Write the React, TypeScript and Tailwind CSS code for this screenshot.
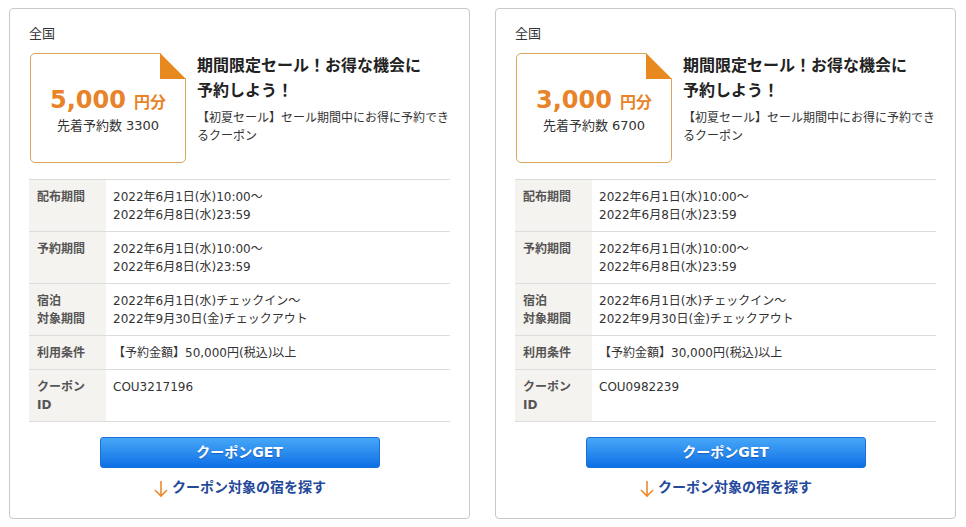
import React from "react";

type Coupon = {
  amount: string;
  count: string;
  cond: string;
  id: string;
};

const coupons: Coupon[] = [
  { amount: "5,000", count: "3300", cond: "【予約金額】50,000円(税込)以上", id: "COU3217196" },
  { amount: "3,000", count: "6700", cond: "【予約金額】30,000円(税込)以上", id: "COU0982239" },
];

function Row({ label, children }: { label: React.ReactNode; children: React.ReactNode }) {
  return (
    <div className="flex border-t border-[#dcdcdc]">
      <div className="w-[77px] shrink-0 bg-[#f5f3ef] pl-[8px] pt-[8px] pb-[7px] text-[12px] leading-[18px] font-bold text-[#555]">
        {label}
      </div>
      <div className="flex-1 pl-[7px] pt-[8px] pb-[7px] text-[12px] leading-[18px] text-[#333]">{children}</div>
    </div>
  );
}

function Card({ c }: { c: Coupon }) {
  return (
    <div className="w-[461px] h-[511px] rounded-[4px] border border-[#c8c8c8] bg-white px-[19px] pt-[16px]">
      <div className="text-[13px] leading-[18px] text-[#333]">全国</div>
      <div className="mt-[10px] flex">
        <div className="relative w-[156px] h-[110px] shrink-0 ml-[1px] rounded-[5px] border border-[#d9a75a] bg-white flex flex-col items-center justify-center">
          <svg className="absolute right-[-1px] top-[-1px]" width="26" height="26" viewBox="0 0 26 26">
            <polygon points="0,0 26,0 26,26" fill="#ffffff" />
            <polygon points="0,0 0,26 26,26" fill="#e8891f" />
          </svg>
          <div className="flex items-baseline text-[#e8832a] font-bold mt-[4px]">
            <span className="text-[24px] leading-[30px]">{c.amount}</span>
            <span className="text-[16px] ml-[8px]">円分</span>
          </div>
          <div className="text-[13px] leading-[20px] text-[#333] mt-[1px]">先着予約数 {c.count}</div>
        </div>
        <div className="ml-[11px] flex-1">
          <div className="text-[16px] leading-[25px] font-bold text-[#222]">
            期間限定セール！お得な機会に
            <br />
            予約しよう！
          </div>
          <div className="mt-[6px] text-[12px] leading-[18px] text-[#333]">
            【初夏セール】セール期間中にお得に予約でき
            <br />
            るクーポン
          </div>
        </div>
      </div>
      <div className="mt-[16px] border-b border-[#dcdcdc]">
        <Row label="配布期間">
          2022年6月1日(水)10:00～
          <br />
          2022年6月8日(水)23:59
        </Row>
        <Row label="予約期間">
          2022年6月1日(水)10:00～
          <br />
          2022年6月8日(水)23:59
        </Row>
        <Row
          label={
            <>
              宿泊
              <br />
              対象期間
            </>
          }
        >
          2022年6月1日(水)チェックイン～
          <br />
          2022年9月30日(金)チェックアウト
        </Row>
        <Row label="利用条件">{c.cond}</Row>
        <Row
          label={
            <>
              クーポン
              <br />
              ID
            </>
          }
        >
          <div className="h-[35px]">{c.id}</div>
        </Row>
      </div>
      <div className="mt-[15px] flex justify-center">
        <div className="w-[280px] h-[31px] rounded-[3px] border border-[#1b6fd6] bg-gradient-to-b from-[#46a7f7] to-[#0c6fe6] flex items-center justify-center text-white font-bold text-[14px] [text-shadow:0_1px_1px_rgba(0,40,120,0.4)]">
          クーポンGET
        </div>
      </div>
      <div className="mt-[8px] flex justify-center items-center">
        <svg width="16" height="18" viewBox="0 0 16 18" className="mt-[4px] mr-[3px]">
          <path d="M8 1 V16 M2 10 L8 16 L14 10" stroke="#ec8a2c" strokeWidth="1.6" fill="none" />
        </svg>
        <span className="text-[14px] leading-[20px] font-bold text-[#24489a]">クーポン対象の宿を探す</span>
      </div>
    </div>
  );
}

export default function App() {
  return (
    <div
      className="w-[966px] h-[527px] bg-white pt-[8px] pl-[9px] flex gap-[25px]"
      style={{ fontFamily: '"DejaVu Sans", "Noto Sans CJK JP", sans-serif' }}
    >
      {coupons.map((c) => (
        <Card key={c.id} c={c} />
      ))}
    </div>
  );
}
